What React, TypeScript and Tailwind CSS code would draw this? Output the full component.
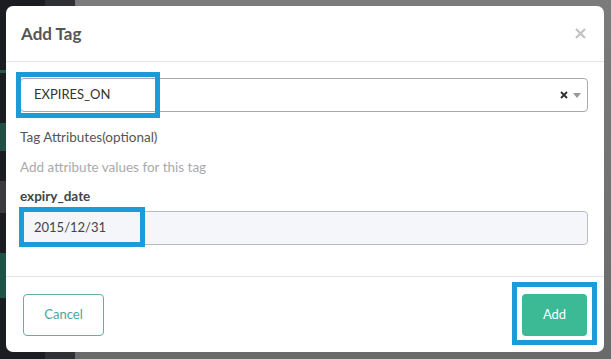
import React from 'react';

const font = { fontFamily: 'Lato, "Open Sans", Arial, sans-serif' };

// fundo escurecido atras do modal
const Backdrop: React.FC = () => (
  <div className="absolute inset-0 flex">
    <div className="w-[45px] h-full bg-[#1c1d21] flex flex-col">
      <div className="h-[70px]" />
      <div className="h-[3px] bg-[#1f5a4c]" />
      <div className="h-[50px]" />
      <div className="h-[28px] bg-[#214f43]" />
      <div className="h-[30px]" />
      <div className="h-[32px] bg-[#3b3b3d]" />
      <div className="h-[40px]" />
      <div className="h-[45px] bg-[#1d5446]" />
    </div>
    <div className="w-[30px] h-full bg-[#2f3033]" />
    <div className="flex-1 h-full bg-gradient-to-b from-[#7b7b7b] to-[#6a6a6a]" />
  </div>
);

const Highlight: React.FC<{ className: string }> = ({ className }) => (
  <div className={`absolute border-[5px] border-[#1b9bd8] pointer-events-none ${className}`} />
);

export default function App() {
  return (
    <div className="relative w-[611px] h-[359px] overflow-hidden" style={font}>
      <Backdrop />

      <div className="absolute left-[6px] top-[6px] w-[598px] h-[346px] bg-white rounded-[7px] flex flex-col">
        {/* cabecalho */}
        <div className="h-[56px] px-[15px] flex items-center justify-between border-b border-[#e5e5e5]">
          <h3 className="text-[17px] font-bold text-[#555]">Add Tag</h3>
          <svg width="11" height="11" viewBox="0 0 11 11" className="mr-[3px]">
            <path d="M1 1l9 9M10 1l-9 9" stroke="#c2c2c2" strokeWidth="2.2" />
          </svg>
        </div>

        {/* corpo */}
        <div className="px-[14px] pt-[16px] flex-1">
          <div className="relative h-[34px] w-[568px] border border-[#aaa] rounded-[4px] flex items-center px-[13px]">
            <span className="text-[13px] text-[#333]">EXPIRES_ON</span>
            <svg width="8" height="8" viewBox="0 0 8 8" className="ml-auto">
              <path d="M1 1l6 6M7 1l-6 6" stroke="#333" strokeWidth="1.9" />
            </svg>
            <svg width="8" height="5" viewBox="0 0 8 5" className="ml-[5px] mr-[-7px]">
              <path d="M0 0h8L4 5z" fill="#999" />
            </svg>
            <Highlight className="left-[-5px] top-[-7px] w-[144px] h-[46px]" />
          </div>

          <p className="mt-[16px] text-[13.5px] text-[#555] leading-[18px]">Tag Attributes(optional)</p>
          <p className="mt-[12px] text-[13.5px] text-[#aaa] leading-[18px]">Add attribute values for this tag</p>
          <p className="mt-[11px] text-[13.5px] font-bold text-[#444] leading-[18px]">expiry_date</p>

          <div className="relative mt-[6px] h-[34px] w-[568px] bg-[#f4f6fa] border border-[#b8bcc2] rounded-[4px] flex items-center px-[13px]">
            <span className="text-[13px] text-[#444]">2015/12/31</span>
            <Highlight className="left-[-2px] top-[-5px] w-[126px] h-[40px]" />
          </div>
        </div>

        {/* rodape */}
        <div className="h-[76px] border-t border-[#e5e5e5] pl-[17px] pr-[17px] flex items-center justify-between">
          <button className="w-[81px] h-[42px] border border-[#69aca6] rounded-[4px] text-[13px] text-[#4fa39a]">
            Cancel
          </button>
          <div className="relative">
            <button className="w-[65px] h-[42px] bg-[#3cb995] rounded-[4px] text-[13px] text-white">
              Add
            </button>
            <Highlight className="left-[-10px] top-[-12px] w-[85px] h-[63px]" />
          </div>
        </div>
      </div>
    </div>
  );
}
